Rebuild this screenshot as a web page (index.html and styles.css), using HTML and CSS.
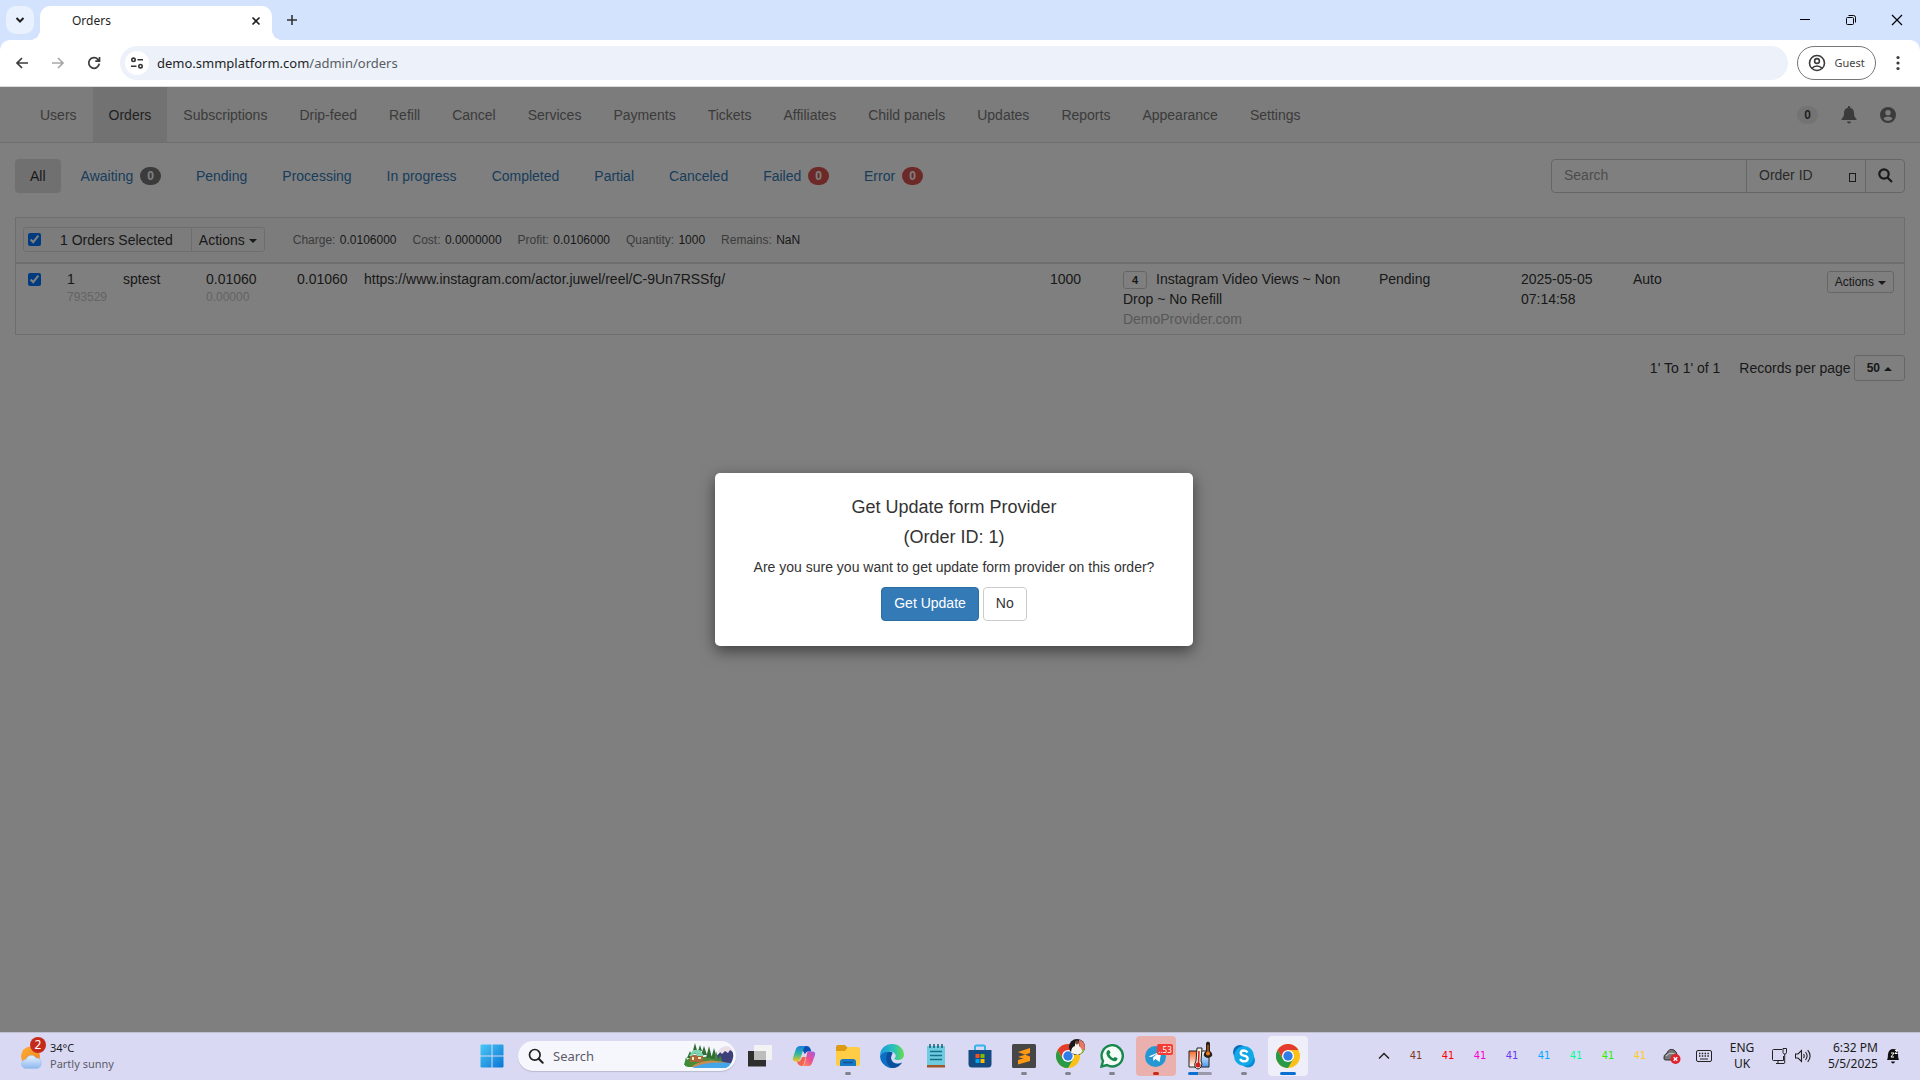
FILE: index.html
```html
<!DOCTYPE html>
<html lang="en">
<head>
<meta charset="utf-8">
<title>Orders</title>
<link rel="stylesheet" href="styles.css">
</head>
<body>
<div class="screen">

<header class="browser">
  <div class="tabstrip">
    <button class="tab-search" aria-label="Search tabs"><svg width="16" height="16" viewBox="0 0 16 16"><path d="M4.500 6l3.500 3.500L11.500 6" fill="none" stroke="#1f1f1f" stroke-width="2"/></svg></button>
    <div class="tab"><span class="tab-title">Orders</span><button class="icon-btn tab-close" aria-label="Close tab"><svg width="16" height="16" viewBox="0 0 16 16"><path d="M4.500 4.500l7 7m0-7l-7 7" stroke="#1f1f1f" stroke-width="1.600"/></svg></button></div>
    <button class="icon-btn new-tab" aria-label="New tab"><svg width="16" height="16" viewBox="0 0 16 16"><path d="M8 3v10M3 8h10" stroke="#333" stroke-width="1.600"/></svg></button>
    <div class="win-controls">
      <button class="icon-btn win" aria-label="Minimise"><svg width="12" height="12" viewBox="0 0 12 12"><path d="M1 5.500h10" stroke="#000"/></svg></button>
      <button class="icon-btn win" aria-label="Restore"><svg width="12" height="12" viewBox="0 0 12 12"><rect x="1.500" y="3.500" width="7" height="7" rx="1" fill="none" stroke="#000"/><path d="M3.500 1.500h5a2 2 0 0 1 2 2v5" fill="none" stroke="#000"/></svg></button>
      <button class="icon-btn win" aria-label="Close"><svg width="12" height="12" viewBox="0 0 12 12"><path d="M1 1l10 10M11 1L1 11" stroke="#000" stroke-width="1.200"/></svg></button>
    </div>
  </div>
  <div class="toolbar">
    <button class="icon-btn tool" aria-label="Back"><svg width="16" height="16" viewBox="0 0 16 16"><path d="M14 8H3M8 3L3 8l5 5" fill="none" stroke="#3c3c3c" stroke-width="1.700"/></svg></button>
    <button class="icon-btn tool" aria-label="Forward"><svg width="16" height="16" viewBox="0 0 16 16"><path d="M2 8h11M8 3l5 5-5 5" fill="none" stroke="#a8a8a8" stroke-width="1.700"/></svg></button>
    <button class="icon-btn tool" aria-label="Reload"><svg width="16" height="16" viewBox="0 0 16 16"><path d="M13.300 8.700A5.300 5.300 0 1 1 11.900 4.300L13.200 5.600M13.500 2v4.200H9.300" fill="none" stroke="#3c3c3c" stroke-width="1.700"/></svg></button>
    <div class="omnibox">
      <button class="site-info" aria-label="Site information"><svg width="14" height="14" viewBox="0 0 14 14" fill="none" stroke="#333" stroke-width="1.600"><circle cx="3.500" cy="3.800" r="1.700"/><path d="M7.500 3.800H13M1 10.200h5.500"/><circle cx="10.500" cy="10.200" r="1.700"/></svg></button>
      <span class="url">demo.smmplatform.com<span class="url-path">/admin/orders</span></span>
    </div>
    <button class="guest"><svg width="18" height="18" viewBox="0 0 18 18" fill="none" stroke="#3c3c3c" stroke-width="1.600"><circle cx="9" cy="9" r="7.500"/><circle cx="9" cy="7" r="2.400"/><path d="M4 14.300c2.500-3 7.500-3 10 0"/></svg>Guest</button>
    <button class="icon-btn menu" aria-label="Menu"><svg width="4" height="16" viewBox="0 0 4 16" fill="#3c3c3c"><circle cx="2" cy="2.500" r="1.600"/><circle cx="2" cy="8" r="1.600"/><circle cx="2" cy="13.500" r="1.600"/></svg></button>
  </div>
</header>

<main class="page">
  <nav class="navbar">
    <a href="#">Users</a><a href="#" class="active">Orders</a><a href="#">Subscriptions</a><a href="#">Drip-feed</a><a href="#">Refill</a><a href="#">Cancel</a><a href="#">Services</a><a href="#">Payments</a><a href="#">Tickets</a><a href="#">Affiliates</a><a href="#">Child panels</a><a href="#">Updates</a><a href="#">Reports</a><a href="#">Appearance</a><a href="#">Settings</a>
    <div class="nav-right">
      <span class="nav-count">0</span>
      <svg width="16" height="18" viewBox="0 0 16 18" fill="#777"><path d="M8 0c.8 0 1.200.5 1.200 1.200v.6c2.500.6 3.800 2.500 3.800 5.200 0 3.500 1 4.500 2.300 5.700.5.500.4 1.300-.5 1.300H1.200c-.9 0-1-.8-.5-1.300C2 11.500 3 10.500 3 7c0-2.700 1.300-4.600 3.800-5.200v-.6C6.800.5 7.200 0 8 0zM6 15.500h4a2 2 0 0 1-4 0z"/></svg>
      <svg width="16" height="16" viewBox="0 0 16 16"><path fill="#777" fill-rule="evenodd" d="M8 0a8 8 0 1 1 0 16A8 8 0 0 1 8 0zm0 3a2.700 2.700 0 1 0 0 5.400A2.700 2.700 0 0 0 8 3zM3.600 11.800c2 2.700 6.800 2.700 8.800 0-1-2-2.500-2-4.400-2s-3.400 0-4.400 2z"/></svg>
    </div>
  </nav>

  <div class="content">
    <div class="filters">
      <a href="#" class="pill active">All</a>
      <a href="#" class="pill">Awaiting<span class="badge">0</span></a>
      <a href="#" class="pill">Pending</a>
      <a href="#" class="pill">Processing</a>
      <a href="#" class="pill">In progress</a>
      <a href="#" class="pill">Completed</a>
      <a href="#" class="pill">Partial</a>
      <a href="#" class="pill">Canceled</a>
      <a href="#" class="pill">Failed<span class="badge danger">0</span></a>
      <a href="#" class="pill">Error<span class="badge danger">0</span></a>
      <form class="search">
        <input type="text" class="search-input" placeholder="Search" aria-label="Search orders">
        <span class="select-wrap"><select class="search-type" aria-label="Search by"><option>Order ID</option></select><span class="select-mark"></span></span>
        <button type="button" class="search-btn" aria-label="Search"><svg width="15" height="15" viewBox="0 0 15 15" fill="none" stroke="#333" stroke-width="2.200"><circle cx="6" cy="6" r="4.700"/><path d="M9.500 9.500l4.500 4.500"/></svg></button>
      </form>
    </div>

    <table class="orders">
      <colgroup><col class="c-check"><col class="c-id"><col class="c-user"><col class="c-charge"><col class="c-start"><col><col class="c-qty"><col class="c-service"><col class="c-status"><col class="c-date"><col class="c-mode"><col class="c-action"></colgroup>
      <thead><tr><th colspan="12">
        <div class="bulk">
          <div class="bulk-group">
            <input type="checkbox" class="check" checked aria-label="Select all orders">
            <span class="bulk-label">1 Orders Selected</span>
            <button class="bulk-actions">Actions<span class="caret"></span></button>
          </div>
          <div class="totals"><span>Charge: <b>0.0106000</b></span><span>Cost: <b>0.0000000</b></span><span>Profit: <b>0.0106000</b></span><span>Quantity: <b>1000</b></span><span>Remains: <b>NaN</b></span></div>
        </div>
      </th></tr></thead>
      <tbody><tr>
        <td class="cell-check"><input type="checkbox" class="check" checked aria-label="Select order 1"></td>
        <td>1<div class="sub">793529</div></td>
        <td>sptest</td>
        <td>0.01060<div class="sub">0.00000</div></td>
        <td>0.01060</td>
        <td>https://www.instagram.com/actor.juwel/reel/C-9Un7RSSfg/</td>
        <td>1000</td>
        <td><span class="service-id">4</span>Instagram Video Views ~ Non Drop ~ No Refill<div class="provider">DemoProvider.com</div></td>
        <td>Pending</td>
        <td>2025-05-05 07:14:58</td>
        <td>Auto</td>
        <td class="cell-action"><button class="btn-xs">Actions<span class="caret"></span></button></td>
      </tr></tbody>
    </table>

    <div class="pager"><span>1' To 1' of 1</span><span class="pager-size">Records per page <button class="page-size">50<span class="caret up"></span></button></span></div>
  </div>

  <div class="overlay">
    <div class="modal" role="dialog" aria-modal="true" aria-labelledby="dlg-title">
      <h4 id="dlg-title">Get Update form Provider</h4>
      <h4>(Order ID: 1)</h4>
      <p>Are you sure you want to get update form provider on this order?</p>
      <div class="modal-actions"><button class="btn primary">Get Update</button><button class="btn">No</button></div>
    </div>
  </div>
</main>

<footer class="taskbar">
  <button class="weather">
    <span class="weather-icon"><svg width="26" height="30" viewBox="0 0 26 30"><defs><linearGradient id="cl" x1="0" y1="0" x2="0" y2="1"><stop offset="0" stop-color="#e8f2ff"/><stop offset="1" stop-color="#8db8ee"/></linearGradient><linearGradient id="sun" x1="0" y1="0" x2="1" y2="1"><stop offset="0" stop-color="#f9b233"/><stop offset="1" stop-color="#f57c1f"/></linearGradient></defs><circle cx="10.500" cy="15" r="9.500" fill="url(#sun)"/><path d="M6 27.500a4.500 4.500 0 0 1 0-9 5.500 5.500 0 0 1 10-1.500 5.300 5.300 0 0 1 1 10.500z" fill="url(#cl)" stroke="#9cc0ee" stroke-width=".6"/></svg><span class="weather-badge">2</span></span>
    <span class="weather-text"><span>34°C</span><span class="muted">Partly sunny</span></span>
  </button>

  <div class="apps">
    <button class="app" aria-label="Start"><svg width="24" height="24" viewBox="0 0 24 24"><defs><linearGradient id="win" gradientUnits="userSpaceOnUse" x1="0" y1="0" x2="24" y2="24"><stop offset="0" stop-color="#4cc9f5"/><stop offset="1" stop-color="#0873d4"/></linearGradient></defs><path fill="url(#win)" d="M.500 1.500q0-1 1-1h10v11H.500zM12.500.500h10q1 0 1 1v10h-11zM.500 12.500h11v11h-10q-1 0-1-1zM12.500 12.500h11v10q0 1-1 1h-10z"/></svg></button>
    <label class="task-search"><svg width="16" height="16" viewBox="0 0 16 16" fill="none" stroke="#222" stroke-width="1.700"><circle cx="6.800" cy="6.800" r="5.300"/><path d="M10.700 10.700l4 4" stroke-linecap="round" stroke-width="2"/></svg><input type="text" placeholder="Search" aria-label="Taskbar search">
      <svg class="scene" width="50" height="26" viewBox="0 0 50 26"><path d="M1 23c0-5 2-7 5-8l26-2 10 9-2 2H4z" fill="#4b8a35"/><path d="M3 15l3-7 3 7zM8 11l3-11 3 11zM14 8l2-6 2 6zM17 12l3-9 3 9zM22 15l3-12 3 12zM27 16l3-11 3 11z" fill="#2f6d34"/><path d="M31 14q4-3 6-6 3-4 6-4 4 1 6 6 1 5-2 10l-4 2z" fill="#3d4078"/><path d="M33 10q3-6 9-7 5 0 7 6l-3-2-2 3-3-2-3 3-2-2z" fill="#eadfe9"/><path d="M30 18l2-10 3 10zM34 20l2-8 3 8z" fill="#3f8240"/><path d="M6 12h13v7H6z" fill="#a9683c"/><path d="M5 13l4-6h7l4 6h-7l-2-3-3 3z" fill="#7fd3b0"/><path d="M8 14h2v3H8zM14 14h3v2h-3z" fill="#ffe9b5"/><path d="M14 20q12-5 30 0l-6 4H8q2-3 6-4z" fill="#c98b4f"/><path d="M8 25q14-7 39-5-1 3-5 5z" fill="#43a6e8"/><path d="M0 22l2-8 3 8z" fill="#3a8d3c"/></svg>
    </label>
    <button class="app" aria-label="Task view"><svg width="24" height="24" viewBox="0 0 24 24"><path d="M6 1h18v15H6z" fill="#f3f3f3"/><path d="M0 7h18v15.500H0z" fill="#2e2e2e"/><path d="M6 7h12v9H6z" fill="#bdbdbd"/></svg></button>
    <button class="app" aria-label="Copilot"><svg width="24" height="22" viewBox="0 0 26 24"><defs><linearGradient id="cp1" x1="0" y1="0" x2="0" y2="1"><stop offset="0" stop-color="#1b7de0"/><stop offset=".5" stop-color="#2fb7a0"/><stop offset="1" stop-color="#f2c61b"/></linearGradient><linearGradient id="cp2" x1="1" y1="0" x2="0" y2="1"><stop offset="0" stop-color="#9b5bea"/><stop offset=".5" stop-color="#ee4f8e"/><stop offset="1" stop-color="#ff9a4a"/></linearGradient></defs><path fill="#0a4fb5" d="M9 1h7q3 0 4 3l1 3h-4q-2 0-3 3z"/><path fill="url(#cp1)" d="M9 1h6q-2 1-3 5l-3 9q-1 3-3 3H4q-4 0-3-4l3-9q1-4 5-4z"/><path fill="url(#cp2)" d="M17 7h5q4 0 3 4l-3 8q-1 4-5 4h-6q2-1 3-4l2-8q0-3 1-4z"/><path fill="#f4644d" d="M5 18h2q2 0 3-3l1-2 4 0-2 7q-1 3-2 3H10q-3 0-4-3z"/></svg></button>
    <button class="app open" aria-label="File Explorer"><svg width="24" height="24" viewBox="0 0 24 24"><path d="M0 3q0-2 2-2h7l3 3h10q2 0 2 2v5H0z" fill="#dd9a12"/><path d="M0 7h9l3-4h10q2 0 2 2v15q0 2-2 2H2q-2 0-2-2z" fill="#ffcd45"/><path d="M4 22v-4q0-3 3-3h10q3 0 3 3v4z" fill="#1778c8"/><path d="M7 18.500h10" stroke="#0b5596" stroke-width="1.500"/></svg></button>
    <button class="app" aria-label="Edge"><svg width="24" height="24" viewBox="0 0 24 24"><defs><linearGradient id="e1" x1="0" y1="0" x2="1" y2="0"><stop offset="0" stop-color="#1a9be0"/><stop offset=".6" stop-color="#2cc3b4"/><stop offset="1" stop-color="#6adb4d"/></linearGradient></defs><path fill="#0d6fc4" d="M0 12A12 12 0 0 0 22 18.500c-5 3-11 0-11-5 0-2 1-3.500 2-4.500C9 6 2 7 0 12z"/><path fill="url(#e1)" d="M0 12C0 4 6 0 12 0c7 0 12 5 12 10.500 0 4-3 5.500-6 5.500-3.500 0-4-1.300-3-2.200 2-2 0-6.300-5-6.300C5 7.500 1 9 0 12z"/><path fill="#0b4f9c" d="M8 8.500C4 14 8 24 13 24c4 0 7-2.500 9-5.500-5 3-11 .5-11-4.500 0-3 1.500-4 1-5-.5-1-3-1.500-4-.5z"/></svg></button>
    <button class="app" aria-label="Notepad"><svg width="20" height="24" viewBox="0 0 20 24"><path d="M1 2h18v19H1z" fill="#6fcbdf"/><path d="M1 21h18v2.500H1z" fill="#a1562a"/><path d="M4 0v4M8 0v4M12 0v4M16 0v4" stroke="#175a70" stroke-width="1.500"/><path d="M4 7.500h12M4 11.500h12M4 15.500h12" stroke="#16708c" stroke-width="1.500"/></svg></button>
    <button class="app" aria-label="Store"><svg width="24" height="24" viewBox="0 0 24 24"><path d="M7 7V3q0-1.500 1.500-1.500h7Q17 1.500 17 3v4" fill="none" stroke="#33b4ec" stroke-width="2"/><path d="M.500 6h23v14q0 3.500-3.500 3.500H4Q.500 23.500.500 20z" fill="#154a80"/><path d="M7.500 10h4v4h-4z" fill="#f25022"/><path d="M12.500 10h4v4h-4z" fill="#7fba00"/><path d="M7.500 15h4v4h-4z" fill="#00a4ef"/><path d="M12.500 15h4v4h-4z" fill="#ffb900"/></svg></button>
    <button class="app open" aria-label="Sublime Text"><svg width="24" height="24" viewBox="0 0 24 24"><rect width="24" height="24" rx="1.500" fill="#464646"/><path d="M18 4L6 8v5l12-4zM6 8l12 4.500v4L6 13zM18 12.500v4.500L6 20.500V16z" fill="#ff9a12"/></svg></button>
    <button class="app open" aria-label="Chrome profile"><svg width="34" height="34" viewBox="0 0 34 34"><g transform="translate(5 5)"><g id="chrome"><circle cx="12" cy="12" r="12" fill="#fbc116"/><path d="M1.600 6A12 12 0 0 1 22.400 6H12L7 15z" fill="#e33b2e"/><path d="M1.600 6A12 12 0 0 0 12 24l5.200-9H6.800z" fill="#2a9a48"/><circle cx="12" cy="12" r="6" fill="#fff"/><circle cx="12" cy="12" r="4.700" fill="#2f7de9"/></g></g><circle cx="26" cy="8" r="8" fill="#171717"/><path d="M28 .500a8 8 0 0 1 5.500 10l-5 1z" fill="#ea7766"/><path d="M33.500 10.500q-1 3-4 5l-3-2 2-3z" fill="#9ccb3c"/><path d="M20 14q0-6 4-7V4q2-2 4 0v3q3 2 3 6l-4 3z" fill="#f4f1ee"/><circle cx="26" cy="3.500" r="2" fill="#6b4a3b"/></svg></button>
    <button class="app open" aria-label="WhatsApp"><svg width="24" height="24" viewBox="0 0 24 24"><path d="M1.500 22.500L3 17A10.600 10.600 0 1 1 7 21z" fill="#f5fbf6" stroke="#16884b" stroke-width="2.400"/><path d="M7.500 6.500q1-1 2 0l1 2.300-1.200 1.500q1.300 2.700 4 4l1.500-1.400 2.600 1.100q.5 2-1.500 3-2.200.8-5.500-1.500-3.500-2.700-4-5.500-.2-2.300 1.100-3.500z" fill="#16884b"/></svg></button>
    <button class="app open alert" aria-label="Telegram"><svg width="24" height="24" viewBox="0 0 24 24"><circle cx="11.500" cy="12.500" r="10.500" fill="#2597d3"/><path d="M4.500 12.500l13-5.500-2 11-4-3-2 2-.5-3.500 5-4.500-6.500 4z" fill="#fff"/></svg><span class="app-count">..53</span></button>
    <button class="app progress" aria-label="Temperature monitor"><svg width="28" height="30" viewBox="0 0 28 30"><defs><linearGradient id="hot" x1="0" y1="0" x2="0" y2="1"><stop offset="0" stop-color="#f36a2c"/><stop offset="1" stop-color="#fff"/></linearGradient><linearGradient id="cold" x1="0" y1="0" x2="0" y2="1"><stop offset="0" stop-color="#fff"/><stop offset="1" stop-color="#4f97ef"/></linearGradient></defs><path d="M3 10h10v16H3z" fill="url(#hot)" stroke="#222"/><path d="M13 10h10v16H13z" fill="url(#cold)" stroke="#222"/><path d="M11 7h5l-1 13q2 3 0 6-3 4-6 0-1-3 1-6z" fill="#f5f2dc" stroke="#222"/><path d="M13 10l-.5 12" stroke="#d21e1e" stroke-width="1.500"/><circle cx="12" cy="24" r="2.500" fill="#d21e1e"/><path d="M20 2q2-3 4 0v8q3 2 2 5-4 4-8 0-1-3 2-5z" fill="#2a2118"/><circle cx="22" cy="12.500" r="2" fill="#ef7a1d"/><path d="M22 4v8" stroke="#ef7a1d"/></svg></button>
    <button class="app open" aria-label="Skype"><svg width="24" height="24" viewBox="0 0 24 24"><circle cx="8" cy="8" r="7" fill="#0a6cbd"/><circle cx="16" cy="16.500" r="7" fill="#0a8bd8"/><circle cx="12" cy="12" r="10" fill="#12a8e8"/><path d="M15.500 8.500q-1.200-2-3.800-2-3 .2-3 2.500 0 2 3.300 2.700 3.700.6 3.700 3 0 2.500-3.600 2.700-3 0-4-2.400" fill="none" stroke="#fff" stroke-width="2.300"/></svg></button>
    <button class="app open current" aria-label="Chrome"><svg width="24" height="24" viewBox="0 0 24 24"><use href="#chrome"/></svg></button>
  </div>

  <div class="tray">
    <button class="tray-item" aria-label="Hidden icons"><svg width="12" height="8" viewBox="0 0 12 8"><path d="M1 6.500l5-5 5 5" fill="none" stroke="#222" stroke-width="1.500"/></svg></button>
    <span class="tray-item t1">41</span><span class="tray-item t2">41</span><span class="tray-item t3">41</span><span class="tray-item t4">41</span><span class="tray-item t5">41</span><span class="tray-item t6">41</span><span class="tray-item t7">41</span><span class="tray-item t8">41</span>
    <span class="tray-item"><svg width="18" height="16" viewBox="0 0 18 16"><path d="M1 11Q0 7 4 5q2-5 7-3 3 2 3 5v5H3q-2 0-2-1z" fill="#777" stroke="#333"/><path d="M3 8q5-5 10-1" fill="none" stroke="#ccc"/><circle cx="12.500" cy="11" r="5" fill="#e0222c"/><path d="M10.700 9.200l3.600 3.600m0-3.600l-3.600 3.600" stroke="#fff" stroke-width="1.300"/></svg></span>
    <span class="tray-item"><svg width="16" height="12" viewBox="0 0 16 12"><rect x=".500" y=".500" width="15" height="11" rx="1.500" fill="none" stroke="#222"/><path d="M3 3.500h10M3 6h10" stroke="#222" stroke-width="1.400" stroke-dasharray="1.400 1.400"/><path d="M4 9h8" stroke="#222"/></svg></span>
    <span class="lang"><span>ENG</span><span>UK</span></span>
    <button class="net" aria-label="Network and volume"><svg width="17" height="17" viewBox="0 0 17 17" fill="none" stroke="#222"><path d="M11 1.500H2.500q-1 0-1 1v9q0 1 1 1h10V8M5 15.500h8M7 12.500v3"/><path d="M12 .500h3.500v4q0 1.500-1.700 1.500T12 4.500zM13.700 6v9.500"/></svg><svg width="17" height="14" viewBox="0 0 17 14" fill="none" stroke="#222" stroke-width="1.100"><path d="M.500 5v4h2.500l3.500 3.500v-11L3 5zM8.500 5q1.500 2 0 4M10.500 3q3.200 4 0 8M12.700 1.200q4.800 5.800 0 11.600"/></svg></button>
    <span class="clock"><span>6:32 PM</span><span>5/5/2025</span></span>
    <span class="bell"><svg width="14" height="16" viewBox="0 0 14 16"><path d="M1 12q1-2 1-6 1-5 5-5 5 0 5 5 0 4 1 6zM5 13.500h4q-.5 2-2 2t-2-2z" fill="#111"/><path d="M5 5h3l-3 4h3M9 2.500h2.500L9 5.500h2.500" fill="none" stroke="#fff"/></svg></span>
  </div>
</footer>
</div>
</body>
</html>
```
FILE: styles.css
```css
* { box-sizing: border-box; }
body { margin: 0; font: 14px/20px "Liberation Sans", Arial, sans-serif; color: #333; background: #fff; }
button, input, select { font: inherit; color: inherit; margin: 0; }
button { border: 0; background: none; padding: 0; }
a { text-decoration: none; }
svg { display: block; flex: none; }
.screen { display: flex; flex-direction: column; min-height: 100vh; }

/* Browser window */
.browser { font-family: "Noto Sans", sans-serif; background: #d3e3fd; border-bottom: 1px solid #dcdcdc; }
.icon-btn { display: flex; align-items: center; justify-content: center; }
.tabstrip { display: flex; align-items: center; height: 40px; padding-left: 6px; }
.tab-search { display: flex; align-items: center; justify-content: center; width: 28px; height: 28px; border-radius: 10px; background: #e9f1fe; }
.tab { position: relative; display: flex; align-items: center; align-self: flex-end; justify-content: space-between; width: 232px; height: 34px; margin-left: 6px; padding: 0 8px 4px 32px; background: #fff; border-radius: 10px 10px 0 0; }
.tab::before, .tab::after { content: ""; position: absolute; bottom: 0; width: 10px; height: 10px; }
.tab::before { right: 100%; background: radial-gradient(circle at 0 0, transparent 10px, #fff 10px); }
.tab::after { left: 100%; background: radial-gradient(circle at 100% 0, transparent 10px, #fff 10px); }
.tab-title { font-size: 12px; color: #1f1f1f; }
.new-tab { width: 40px; height: 28px; }
.win-controls { display: flex; margin-left: auto; }
.win { width: 46px; height: 40px; }
.toolbar { display: flex; align-items: center; height: 46px; padding: 0 12px 0 4px; background: #fff; border-radius: 10px 10px 0 0; }
.tool { width: 36px; height: 34px; }
.omnibox { display: flex; flex: 1; align-items: center; gap: 8px; height: 34px; margin-left: 8px; padding-left: 5px; border-radius: 17px; background: #ecf1fa; }
.site-info { display: flex; align-items: center; justify-content: center; width: 24px; height: 24px; border-radius: 12px; background: #fff; }
.url { font-size: 13px; color: #1f1f1f; }
.url-path { color: #5a5d61; }
.guest { display: flex; align-items: center; justify-content: center; gap: 8px; width: 79px; height: 34px; margin-left: 9px; border: 1px solid #747775; border-radius: 17px; font-size: 11px; color: #444; }
.menu { width: 20px; height: 34px; margin-left: 12px; }

/* Admin panel */
.page { position: relative; display: flex; flex-direction: column; flex: 1; }
.navbar { display: flex; min-height: 56px; padding-left: 24px; background: #f8f8f8; border-bottom: 1px solid #e0e0e0; }
.navbar a { padding: 18px 16px 17px; color: #777; }
.navbar .active { color: #444; background: #e4e4e4; }
.nav-right { display: flex; align-items: center; gap: 23px; margin-left: auto; padding-right: 24px; }
.nav-count, .badge { display: inline-block; padding: 3px 7px; border-radius: 10px; font-size: 12px; font-weight: bold; line-height: 12px; }
.nav-count { background: #e7e7e7; color: #444; }
.content { padding: 16px 15px; }
.filters { display: flex; align-items: center; gap: 5px; }
.pill { display: flex; align-items: center; height: 34px; padding: 0 15px; border-radius: 4px; color: #337ab7; }
.pill.active { background: #e0e0e0; color: #333; }
.badge { margin-left: 7px; background: #777; color: #fff; }
.badge.danger { background: #d9534f; }
.search { display: flex; width: 354px; height: 34px; margin-left: auto; border: 1px solid #ccc; border-radius: 4px; }
.search-input { flex: 1; min-width: 0; padding: 0 12px 2px; border: 0; background: none; }
.search-input::placeholder { color: #999; }
.select-wrap { position: relative; display: flex; width: 120px; border: solid #ccc; border-width: 0 1px; }
.search-type { appearance: none; width: 100%; padding: 0 12px 2px; border: 0; background: none; color: #555; }
.select-mark { position: absolute; right: 9px; top: 13px; width: 7px; height: 9px; border: 1px solid #333; pointer-events: none; }
.search-btn { display: flex; align-items: center; justify-content: center; width: 38px; padding-bottom: 2px; }

.orders { width: 100%; margin-top: 24px; table-layout: fixed; border-collapse: separate; border-spacing: 0; border: 1px solid #ddd; }
.c-check { width: 43px; }
.c-id { width: 56px; }
.c-user { width: 83px; }
.c-charge { width: 91px; }
.c-start { width: 67px; }
.c-qty { width: 73px; }
.c-service { width: 256px; }
.c-status { width: 142px; }
.c-date { width: 112px; }
.c-mode { width: 150px; }
.c-action { width: 129px; }
.orders th { height: 46px; padding: 0 7px 1px; background: #f9f9f9; border-bottom: 2px solid #ddd; font-weight: normal; text-align: left; }
.orders td { padding: 5px 8px; vertical-align: top; }
.bulk { display: flex; align-items: center; gap: 28px; }
.bulk-group { display: flex; align-items: center; height: 25px; border: 1px solid #ddd; border-radius: 3px; }
.check { width: 13px; height: 13px; margin: 0; accent-color: #0075ff; }
.bulk-group .check { margin: 0 4px; }
.bulk-label { padding: 0 18px 0 15px; }
.bulk-actions { height: 23px; padding: 0 7px; border-left: 1px solid #ddd; }
.caret { display: inline-block; margin-left: 4px; border: 4px solid transparent; border-top-color: currentColor; border-bottom: 0; vertical-align: middle; }
.caret.up { border-top: 0; border-bottom: 4px solid; border-bottom-color: currentColor; }
.totals { display: flex; gap: 16px; font-size: 12px; color: #777; }
.totals b { margin-left: 1px; font-weight: normal; color: #333; }
.orders .cell-check { padding: 9px 12px; line-height: 0; }
.sub { font-size: 12px; line-height: 16px; color: #c8c8c8; }
.provider { color: #b0b0b0; }
.service-id { display: inline-block; margin-right: 9px; padding: 2px 8px; border: 1px solid #ccc; border-radius: 3px; font-size: 11px; font-weight: bold; line-height: 12px; }
.orders .cell-action { padding: 7px 10px; text-align: right; line-height: 0; }
.btn-xs { height: 22px; padding: 0 7px; border: 1px solid #ccc; border-radius: 3px; font-size: 12px; line-height: 20px; }
.pager { display: flex; align-items: center; justify-content: flex-end; gap: 19px; margin-top: 20px; }
.pager > span { padding-bottom: 1px; }
.pager-size { display: flex; align-items: center; gap: 3px; }
.page-size { height: 26px; padding: 0 12px; border: 1px solid #ccc; border-radius: 3px; font-size: 12px; font-weight: bold; }

.overlay { position: absolute; inset: 0; display: flex; align-items: center; justify-content: center; padding-right: 12px; background: rgba(0, 0, 0, .5); }
.modal { width: 478px; padding: 24px 20px 25px; border-radius: 5px; background: #fff; box-shadow: 0 5px 15px rgba(0, 0, 0, .5); text-align: center; }
.modal h4 { margin: 0 0 10px; font-size: 18px; font-weight: normal; }
.modal p { margin: 0 0 10px; }
.modal-actions { display: flex; justify-content: center; gap: 4px; }
.btn { height: 34px; padding: 5px 12px 7px; border: 1px solid #ccc; border-radius: 4px; background: #fff; }
.btn.primary { border-color: #2e6da4; background: #337ab7; color: #fff; }

/* Taskbar */
.taskbar { display: flex; align-items: stretch; height: 48px; padding-bottom: 1px; background: #d9d9f3; border-top: 1px solid #c0c0d0; font: 12px/16px "Noto Sans", sans-serif; color: #1b1b1b; }
.weather { display: flex; align-items: center; gap: 4px; flex: 0 1 470px; padding-left: 20px; text-align: left; }
.weather-icon { position: relative; }
.weather-badge { position: absolute; left: 10px; top: -4px; width: 16px; height: 16px; border-radius: 8px; background: #c42b1c; color: #fff; text-align: center; }
.weather-text { font-size: 11px; }
.weather-text, .lang, .clock { display: flex; flex-direction: column; justify-content: center; }
.muted { color: #5c5c68; }
.apps { display: flex; align-items: center; }
.app { position: relative; display: flex; align-items: center; justify-content: center; width: 44px; height: 46px; }
.task-search { display: flex; align-items: center; width: 218px; height: 30px; margin: 0 2px 0 4px; padding: 0 2px 0 10px; border-radius: 15px; background: #f6f6fd; box-shadow: 0 1px 1px #b8b8d0; }
.task-search input { flex: 1; min-width: 0; margin-left: 9px; padding: 0; border: 0; background: none; font-size: 13px; }
.task-search input::placeholder { color: #5c5c68; }
.app svg { position: relative; }
.open::after { content: ""; position: absolute; left: 19px; bottom: 4px; width: 6px; height: 3px; border-radius: 2px; background: #83838f; }
.alert::before, .current::before { content: ""; position: absolute; inset: 3px 2px; border-radius: 4px; background: #e9b0ae; }
.current::before { background: #efeffa; }
.alert::after { background: #c42b1c; }
.current::after { left: 14px; width: 16px; background: #0a6fd0; }
.progress::after { content: ""; position: absolute; left: 10px; bottom: 4px; width: 24px; height: 3px; background: linear-gradient(90deg, #0a6fd0 10px, #9a9aac 10px); border-radius: 2px; }
.app-count { position: absolute; left: 23px; top: 11px; width: 16px; height: 11px; border-radius: 2px; background: #f23c34; color: #fff; font-size: 8px; line-height: 11px; text-align: center; }
.tray { display: flex; align-items: center; margin-left: auto; padding-right: 20px; }
.tray-item { display: flex; align-items: center; justify-content: center; width: 32px; height: 40px; font: 11px/16px "DejaVu Sans Condensed", "DejaVu Sans", sans-serif; }
.t1 { color: #7d3a1a; }
.t2 { color: #f00; }
.t3 { color: #f0c; }
.t4 { color: #6a35f0; }
.t5 { color: #0af; }
.t6 { color: #0f9; }
.t7 { color: #3e0; }
.t8 { color: #fc2; }
.lang { width: 44px; text-align: center; }
.net { display: flex; align-items: center; gap: 7px; width: 43px; margin-left: 7px; }
.clock { width: 64px; text-align: right; }
.bell { margin-left: 8px; }
```
